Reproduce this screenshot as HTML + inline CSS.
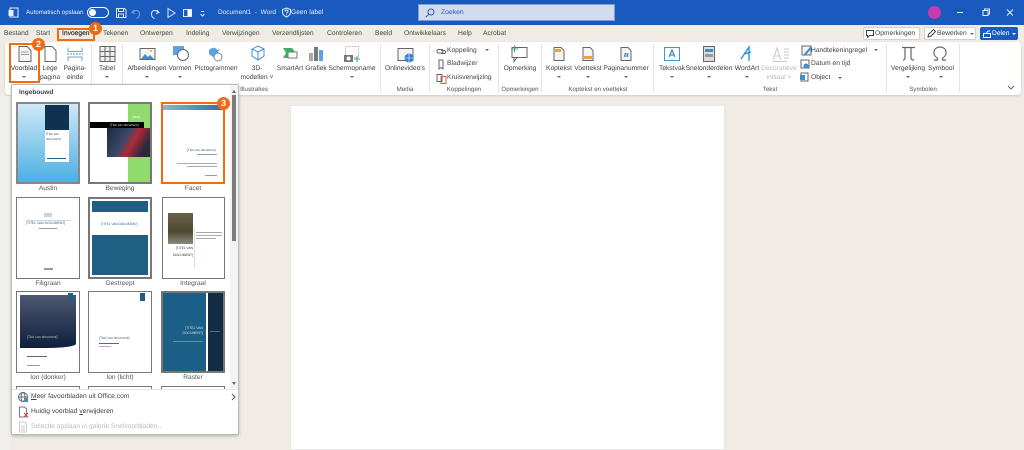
<!DOCTYPE html>
<html><head><meta charset="utf-8"><style>
html,body{margin:0;padding:0;width:1024px;height:450px;overflow:hidden;background:#f0ece4}
#r{position:absolute;left:0;top:0;width:1024px;height:450px;overflow:hidden;font-family:"Liberation Sans",sans-serif;color:#444;font-size:6.7px;filter:blur(.35px);text-rendering:geometricPrecision}
#r div,#r span.a,#r svg{position:absolute}
.t{white-space:nowrap;line-height:10px}
.c{white-space:nowrap;line-height:9px;text-align:center;transform:translateX(-50%)}
.g{white-space:nowrap;line-height:9px;font-size:6.2px;color:#555;text-align:center;transform:translateX(-50%);top:85px}
.w{color:#e8eefa}
.sep{width:1px;background:#e4e4e4;top:44px;height:48px}
.th{background:#fff;border:1px solid #777;box-sizing:border-box;width:64px;height:82px;overflow:hidden}
.l{white-space:nowrap;font-size:6.6px;line-height:10px;color:#555;text-align:center;width:64px}
.o{border:2.5px solid #f26b12;box-sizing:border-box}
.n{width:13px;height:13px;border-radius:50%;background:#f26b12;color:#fff;font-size:9px;line-height:13px;text-align:center;font-weight:bold}
.ar{width:0;height:0;border-left:2px solid transparent;border-right:2px solid transparent;border-top:2px solid #666}
.b{background:#1f5f83}
.x{background:#999;height:1px}
.m{white-space:nowrap;font-size:3.2px;line-height:5px;color:#2a5f85}
</style></head><body><div id="r">

<!-- title bar -->
<div style="left:0;top:0;width:1024px;height:25px;background:#185abd"></div>
<svg style="left:8px;top:7px" width="11" height="11" viewBox="0 0 11 11"><rect x="2" y="1" width="8" height="9" fill="none" stroke="#e8eefa"/><rect x="0.5" y="3" width="5" height="6" fill="#e8eefa"/></svg>
<div class="t w" style="left:26px;top:8px;font-size:6.200px">Automatisch opslaan</div>
<div style="left:87px;top:7px;width:22px;height:11px;border:1px solid #fff;border-radius:7px;box-sizing:border-box"></div>
<div style="left:89px;top:9px;width:7px;height:7px;background:#fff;border-radius:50%"></div>
<svg style="left:115px;top:7px" width="100" height="12" viewBox="0 0 100 12" fill="none" stroke="#dfe8f8"><path d="M1.500 1.500h8l1.500 1.500v7.500h-9.500zM3.500 1.500v3h5v-3M3.500 10.500v-3.500h5v3.500"/><path d="M19 3l-2 2.500 3 1M17.500 5.500c3-3.500 7-2 7 1.500s-2 4-3 4.500" stroke="#7fa3dc"/><path d="M42 3l2 2.500-3 1M43.500 5.500c-3-3.500-7-2-7 1.500s2 4 3 4.500"/><path d="M53 1.500l7 4.500-7 4.500z"/><rect x="68.500" y="2.500" width="8" height="7"/><rect x="72.500" y="3" width="4" height="6" fill="#fff" stroke="none"/><path d="M86 4.500h3M85.500 7l2 2 2-2" /></svg>
<div class="t w" style="left:218px;top:8px;font-size:6.500px">Document1 &nbsp;-&nbsp; Word</div>
<svg style="left:281px;top:7px" width="11" height="11" viewBox="0 0 11 11" fill="none" stroke="#e8eefa"><path d="M5.500 1l4 1.500v3c0 2-2 3.500-4 4.500-2-1-4-2.500-4-4.500v-3z"/><path d="M4 4.500c0-2 3-2 3 0 0 1-1.500 1-1.500 2M5.500 7.500v.8"/></svg>
<div class="t w" style="left:291px;top:8px">Geen label</div>
<div style="left:418px;top:4px;width:197px;height:17px;background:#d2dcee;border:1px solid #7e9cd0;box-sizing:border-box"></div>
<svg style="left:425px;top:8px" width="10" height="10" viewBox="0 0 10 10" fill="none" stroke="#2a5caa"><circle cx="6" cy="4" r="3"/><path d="M3.800 6.200l-3 3"/></svg>
<div class="t" style="left:441px;top:8px;font-size:6.800px;color:#2a5caa">Zoeken</div>
<div style="left:928px;top:6px;width:13px;height:13px;border-radius:50%;background:#c63ab2"></div>
<svg style="left:955px;top:6px" width="60" height="13" viewBox="0 0 60 13" fill="none" stroke="#e8eefa"><path d="M2 6.500h6"/><rect x="28" y="4.500" width="5" height="5"/><path d="M29.500 4.500v-1.500h5v5h-1.500"/><path d="M52 3.500l6 6M58 3.500l-6 6"/></svg>

<!-- tabs -->
<div class="t" style="left:4px;top:29px">Bestand</div>
<div class="t" style="left:36px;top:29px">Start</div>
<div class="t" style="left:62px;top:29px;-webkit-text-stroke:.2px #333;color:#333">Invoegen</div>
<div class="t" style="left:103px;top:29px">Tekenen</div>
<div class="t" style="left:140px;top:29px">Ontwerpen</div>
<div class="t" style="left:186px;top:29px">Indeling</div>
<div class="t" style="left:222px;top:29px">Verwijzingen</div>
<div class="t" style="left:272px;top:29px">Verzendlijsten</div>
<div class="t" style="left:327px;top:29px">Controleren</div>
<div class="t" style="left:375px;top:29px">Beeld</div>
<div class="t" style="left:404px;top:29px">Ontwikkelaars</div>
<div class="t" style="left:458px;top:29px">Help</div>
<div class="t" style="left:483px;top:29px">Acrobat</div>

<div style="left:863px;top:27px;width:57px;height:13px;background:#fff;border:1px solid #d0d0d0;border-radius:2px;box-sizing:border-box"></div>
<svg style="left:866px;top:30px" width="8" height="8" viewBox="0 0 8 8" fill="none" stroke="#444"><path d="M.5.500h7v5h-4l-2 2v-2h-1z"/></svg>
<div class="t" style="left:875px;top:29px">Opmerkingen</div>
<div style="left:924px;top:27px;width:52px;height:13px;background:#fff;border:1px solid #d0d0d0;border-radius:2px;box-sizing:border-box"></div>
<svg style="left:927px;top:29px" width="9" height="9" viewBox="0 0 9 9" fill="none" stroke="#444"><path d="M1 8l.5-2.500 5-5 2 2-5 5z"/></svg>
<div class="t" style="left:937px;top:29px">Bewerken</div>
<div class="ar" style="left:970px;top:33px"></div>
<div style="left:980px;top:27px;width:38px;height:13px;background:#185abd;border-radius:2px"></div>
<svg style="left:983px;top:30px" width="8" height="8" viewBox="0 0 8 8" fill="none" stroke="#fff"><path d="M.5 3.500h7v4h-7zM3 3.500l2-2.500h2"/></svg>
<div class="t" style="left:992px;top:29px;color:#fff">Delen</div>
<div class="ar" style="left:1012px;top:33px;border-top-color:#fff"></div>

<!-- ribbon -->
<div style="left:5px;top:42px;width:1016px;height:53px;background:#fff;border-radius:4px;box-shadow:0 1px 2px rgba(0,0,0,.15)"></div>
<div class="sep" style="left:91px"></div><div class="sep" style="left:122px"></div><div class="sep" style="left:380px"></div><div class="sep" style="left:429px"></div><div class="sep" style="left:498px"></div><div class="sep" style="left:541px"></div><div class="sep" style="left:653px"></div><div class="sep" style="left:886px"></div><div class="sep" style="left:959px"></div>

<!-- ribbon icons -->
<svg style="left:0;top:42px" width="1024" height="30" viewBox="0 42 1024 30" fill="none" stroke="#666">
<path d="M19 46.500h8l4 4v11h-12z" fill="#f4f4f4"/><path d="M21 52h7M21 54.500h8" stroke="#999"/>
<path d="M45 46.500h7l4 4v11h-11z"/>
<path d="M68 47.500v4h14v-4M68 61v-4h14v4" stroke="#7a9cc0"/><path d="M67 54h16" stroke="#5b8fc4" stroke-dasharray="2 1"/>
<rect x="100" y="46.500" width="15" height="15" fill="#eee"/><path d="M100 51.500h15M100 56.500h15M105 46.500v15M110 46.500v15"/>
<rect x="140" y="48.500" width="15" height="11" fill="#f6f6f6"/><path d="M141 59l4-5 3 3 2-2 4 4z" fill="#3f8fcf" stroke="none"/><circle cx="151" cy="51" r="1" fill="#f0a030" stroke="none"/>
<rect x="173" y="46" width="11" height="9" fill="#5aa3e0" stroke="none"/><circle cx="183" cy="55" r="5.500" fill="#fff" stroke="#666"/>
<path d="M209 50c3-3 7-3 8 0l3-1-2 3c0 3-2 5-5 5l-4-3z" fill="#5aa3e0" stroke="none"/><circle cx="218" cy="57" r="4" fill="#fff" stroke="#888"/>
<path d="M258 46l6 3v7l-6 4-6-4v-7zM252 49l6 3 6-3M258 52v8" stroke="#3f8fcf"/>
<path d="M283 48h9l4 5-4 5h-9l3-5z" fill="#3fae6a" stroke="none"/><rect x="288" y="52" width="9" height="6" fill="#fff" stroke="#777"/>
<rect x="309" y="53" width="4" height="8" fill="#aaa" stroke="none"/><rect x="314" y="47" width="4" height="14" fill="#777" stroke="none"/><rect x="319" y="50" width="4" height="11" fill="#5aa3e0" stroke="none"/>
<rect x="345.500" y="46.500" width="13" height="11" stroke="#bbb" stroke-dasharray="2 1"/><rect x="344" y="55" width="9" height="7" fill="#777" stroke="none"/><circle cx="348.500" cy="58.500" r="2" fill="#fff" stroke="none"/><path d="M354 59h6M357 56v6" stroke="#3fae6a"/>
<rect x="398" y="48.500" width="15" height="12" fill="#f4f4f4"/><circle cx="409" cy="58" r="4.500" fill="#2f80d0" stroke="none"/><path d="M405 58h8M409 53.500v9" stroke="#fff" stroke-width=".6"/>
<rect x="512" y="47.500" width="15" height="10" /><path d="M514 57.500v4l3-4" /><path d="M511 49h7M514.500 45.500v7" stroke="#3fae6a"/>
<path d="M554 47.500h7l3 3v10h-10z" fill="#f4f4f4"/><rect x="555" y="49" width="6" height="3" fill="#f0a040" stroke="none"/>
<path d="M583 47.500h7l3 3v10h-10z" fill="#f4f4f4"/><rect x="584" y="56" width="8" height="3" fill="#f0a040" stroke="none"/>
<path d="M621 47.500h7l3 3v10h-10z" fill="#f4f4f4"/><path d="M624.500 57l1-4M627 57l1-4M624 54h4.500M624 56h4.500" stroke="#2f6fb0" stroke-width=".7"/>
<rect x="664.500" y="47.500" width="15" height="13" stroke="#4a90d0"/><path d="M669 57l3-7 3 7M670 55h4" stroke="#2f6fb0"/>
<rect x="703.500" y="46.500" width="11" height="15" fill="#ddd"/><rect x="705" y="49" width="8" height="3" fill="#3f8fcf" stroke="none"/><rect x="705" y="54" width="8" height="3" fill="#999" stroke="none"/>
<path d="M741 59l8-12v14M744 54l7-2M741 59" stroke="#1f8fe0" stroke-width="1.300"/>
<path d="M773 60l4-12 4 12M774.500 56h5M773 61.500h14M784 49h5M784 52h5M784 55h5M784 58h5" stroke="#c8c8c8"/>
<rect x="802" y="46" width="9" height="9" fill="#f4f4f4"/><path d="M804 54l6-7 2 1-6 7z" fill="#3f8fcf" stroke="none"/>
<rect x="801" y="60" width="8" height="8"/><circle cx="806" cy="66" r="2.500" fill="#3f8fcf" stroke="none"/>
<path d="M902 47.500h13M905 48v9.500c0 2-1 2.500-2 2.500M911 48v10c0 1.500 1 2 3 2" stroke-width="1.200"/>
<path d="M934 60h3.500v-2c-6-3-4-11 2.500-11s8.500 8 2.500 11v2h3.500" stroke-width="1.200"/>
</svg>
<svg style="left:0;top:42px" width="1024" height="50" viewBox="0 42 1024 50" fill="none" stroke="#666">
<path d="M438 49.500h4a2 2 0 010 3.500h-4a2 2 0 010-3.500zM441 50.500h4a2 2 0 010 3h-4"/>
<path d="M439 60v9l2-1.500 2 1.500v-9z"/>
<rect x="437" y="74.500" width="5" height="7"/><rect x="441" y="76.500" width="5" height="7" stroke="#d06050"/>
<rect x="801" y="73" width="7" height="8"/><rect x="800" y="75" width="5" height="5" fill="#3f8fcf" stroke="none"/>
</svg>

<!-- ribbon text -->
<div class="c" style="left:24px;top:64px;color:#333">Voorblad</div>
<div class="c" style="left:50px;top:64px">Lege<br>pagina</div>
<div class="c" style="left:75px;top:64px">Pagina-<br>einde</div>
<div class="c" style="left:107px;top:64px">Tabel</div>
<div class="c" style="left:147px;top:64px">Afbeeldingen</div>
<div class="c" style="left:180px;top:64px">Vormen</div>
<div class="c" style="left:216px;top:64px">Pictogrammen</div>
<div class="c" style="left:257px;top:64px">3D-<br>modellen ˅</div>
<div class="c" style="left:290px;top:64px">SmartArt</div>
<div class="c" style="left:316px;top:64px">Grafiek</div>
<div class="c" style="left:352px;top:64px">Schermopname</div>
<div class="c" style="left:405px;top:64px">Onlinevideo's</div>
<div class="t" style="left:447px;top:46px">Koppeling</div>
<div class="t" style="left:447px;top:59px">Bladwijzer</div>
<div class="t" style="left:447px;top:73px">Kruisverwijzing</div>
<div class="c" style="left:520px;top:64px">Opmerking</div>
<div class="c" style="left:559px;top:64px">Koptekst</div>
<div class="c" style="left:588px;top:64px">Voettekst</div>
<div class="c" style="left:626px;top:64px">Paginanummer</div>
<div class="c" style="left:672px;top:64px">Tekstvak</div>
<div class="c" style="left:709px;top:64px">Snelonderdelen</div>
<div class="c" style="left:747px;top:64px">WordArt</div>
<div class="c" style="left:779px;top:64px;color:#bbb">Decoratieve<br>initiaal ˅</div>
<div class="t" style="left:811px;top:46px">Handtekeningregel</div>
<div class="t" style="left:811px;top:59px">Datum en tijd</div>
<div class="t" style="left:811px;top:73px">Object</div>
<div class="c" style="left:908px;top:64px">Vergelijking</div>
<div class="c" style="left:941px;top:64px">Symbool</div>
<div class="ar" style="left:22px;top:76px"></div><div class="ar" style="left:105px;top:76px"></div><div class="ar" style="left:145px;top:76px"></div><div class="ar" style="left:178px;top:76px"></div><div class="ar" style="left:350px;top:76px"></div><div class="ar" style="left:557px;top:76px"></div><div class="ar" style="left:586px;top:76px"></div><div class="ar" style="left:624px;top:76px"></div><div class="ar" style="left:670px;top:76px"></div><div class="ar" style="left:707px;top:76px"></div><div class="ar" style="left:745px;top:76px"></div><div class="ar" style="left:906px;top:76px"></div><div class="ar" style="left:939px;top:76px"></div><div class="ar" style="left:485px;top:49px"></div><div class="ar" style="left:874px;top:49px"></div><div class="ar" style="left:838px;top:77px"></div>
<div class="g" style="left:254px">Illustraties</div>
<div class="g" style="left:405px">Media</div>
<div class="g" style="left:464px">Koppelingen</div>
<div class="g" style="left:520px">Opmerkingen</div>
<div class="g" style="left:598px">Koptekst en voettekst</div>
<div class="g" style="left:770px">Tekst</div>
<div class="g" style="left:923px">Symbolen</div>
<svg style="left:1007px;top:85px" width="8" height="6" viewBox="0 0 8 6" fill="none" stroke="#666"><path d="M1 1l3 3 3-3"/></svg>

<!-- page -->
<div style="left:290px;top:105px;width:435px;height:345px;background:#fff;border:1px solid #e8e8e8;box-sizing:border-box"></div>
<div style="left:0;top:96px;width:11px;height:354px;background:#eff0ee"></div>

<!-- gallery -->
<div style="left:11px;top:84px;width:228px;height:351px;background:#fff;border:1px solid #bbb;border-radius:2px;box-sizing:border-box;box-shadow:0 1px 3px rgba(0,0,0,.25)"></div>
<div class="t" style="left:19px;top:88px;font-weight:bold;font-size:6.500px">Ingebouwd</div>
<div style="left:230px;top:85px;width:8px;height:303px;background:#f3f3f3"></div>
<div style="left:232px;top:95px;width:4px;height:146px;background:#7c7c7c"></div>
<div style="left:232px;top:90px;border-left:2px solid transparent;border-right:2px solid transparent;border-bottom:3px solid #666"></div>
<div style="left:232px;top:382px;border-left:2px solid transparent;border-right:2px solid transparent;border-top:3px solid #666"></div>

<!-- row 1 -->
<div class="th" style="left:16px;top:102px;background:linear-gradient(#cfe8f6,#4bb0e4);border:2px solid #888">
 <div style="left:27px;top:1px;width:24px;height:25px;background:#12304f"></div>
 <div style="left:27px;top:26px;width:24px;height:32px;background:#fff"></div>
 <div class="m" style="left:28px;top:28px;line-height:4.500px">[Titel van<br>document]</div>
 <div class="x" style="left:29px;top:54px;width:19px;background:#2a5f85"></div>
</div>
<div class="th" style="left:88px;top:102px;border:2px solid #777">
 <div style="left:38px;top:0;width:24px;height:78px;background:#8fdc6c"></div>
 <div style="left:0;top:18px;width:54px;height:6px;background:#000"></div>
 <div class="m" style="left:20px;top:19px;color:#ddd">[Titel van document]</div>
 <div class="m" style="left:42px;top:11px;color:#fff">[Jaar]</div>
 <div style="left:17px;top:24px;width:45px;height:29px;background:linear-gradient(120deg,#1a2740,#3b4a6a 40%,#b02a36 55%,#2a2a3a 80%)"></div>
</div>
<div class="th" style="left:162px;top:103px;width:62px;height:81px;border:none">
 <div style="left:0;top:2px;width:62px;height:5px;background:linear-gradient(90deg,#8fb8cc,#2d6f90)"></div>
 <div class="m" style="left:25px;top:45px">[Titel van document]</div>
 <div class="x" style="left:35px;top:51px;width:20px"></div>
 <div class="x" style="left:15px;top:60px;width:40px;background:#aaa"></div>
 <div class="x" style="left:25px;top:63px;width:30px;background:#aaa"></div>
 <div class="x" style="left:43px;top:72px;width:12px"></div>
</div>
<div class="o" style="left:161px;top:102px;width:64px;height:82px"></div>

<!-- row 2 -->
<div class="th" style="left:16px;top:197px">
 <div class="x" style="left:9px;top:22px;width:45px;background:#cdd8df"></div>
 <div class="m" style="left:9px;top:23px;font-size:3.400px">[TITEL VAN DOCUMENT]</div>
 <div class="x" style="left:22px;top:30px;width:18px"></div>
 <div class="x" style="left:27px;top:15px;width:8px;background:#c4d8e2;height:4px"></div>
 <div class="x" style="left:27px;top:70px;width:9px;height:2px"></div>
</div>
<div class="th" style="left:88px;top:197px;border:2px solid #777">
 <div class="b" style="left:2px;top:2px;width:56px;height:11px"></div>
 <div class="m" style="left:11px;top:23px;font-size:3.200px">[TITEL VAN DOCUMENT]</div>
 <div class="b" style="left:2px;top:36px;width:56px;height:40px"></div>
</div>
<div class="th" style="left:162px;top:197px;width:63px">
 <div style="left:5px;top:15px;width:25px;height:31px;background:linear-gradient(#6b6048,#4d4930 60%,#8a8a80)"></div>
 <div class="m" style="left:10px;top:47px;font-size:3.300px;line-height:7px;text-align:right;color:#333">[TITEL VAN<br>DOCUMENT]</div>
 <div class="x" style="left:33px;top:34px;width:26px;background:#aaa"></div>
 <div class="x" style="left:33px;top:37px;width:26px;background:#aaa"></div>
 <div class="x" style="left:33px;top:40px;width:20px;background:#aaa"></div>
 <div style="left:31px;top:30px;width:1px;height:40px;background:#f0d8d0"></div>
</div>

<!-- row 3 -->
<div class="th" style="left:16px;top:291px">
 <div style="left:3px;top:3px;width:56px;height:53px;border-radius:0 0 50%/0 0 8%;background:linear-gradient(#4d5870,#0f1f3c)"></div>
 <div class="b" style="left:51px;top:1px;width:5px;height:8px"></div>
 <div class="m" style="left:10px;top:43px;color:#b8c2d0;font-size:3.400px">[Titel van document]</div>
 <div class="x" style="left:10px;top:64px;width:20px;height:1px;background:#666"></div>
 <div class="x" style="left:10px;top:73px;width:13px"></div>
</div>
<div class="th" style="left:88px;top:291px">
 <div class="b" style="left:51px;top:1px;width:5px;height:8px"></div>
 <div class="m" style="left:10px;top:44px;color:#48647a;font-size:3.400px">[Titel van document]</div>
 <div class="x" style="left:10px;top:51px;width:20px;background:#666"></div>
 <div class="x" style="left:10px;top:54px;width:12px;background:#c0a8c0"></div>
</div>
<div class="th" style="left:161px;top:291px;width:64px;background:#fff;border:2px solid #777">
 <div class="b" style="left:0;top:0;width:43px;height:78px;background:#1a5f85"></div>
 <div style="left:45px;top:0;width:15px;height:78px;background:#122c46"></div>
 <div class="m" style="right:20px;top:33px;color:#d0e0e8;font-size:3.400px;text-align:right;line-height:5px">[TITEL VAN<br>DOCUMENT]</div>
 <div class="x" style="left:10px;top:48px;width:30px;background:#5f93ad"></div>
 <div class="x" style="left:47px;top:38px;width:10px;background:#50708a"></div>
</div>

<div class="l" style="left:16px;top:184px">Austin</div>
<div class="l" style="left:88px;top:184px">Beweging</div>
<div class="l" style="left:161px;top:184px">Facet</div>
<div class="l" style="left:16px;top:279px">Filigraan</div>
<div class="l" style="left:88px;top:279px">Gestreept</div>
<div class="l" style="left:161px;top:279px">Integraal</div>
<div class="l" style="left:16px;top:373px">Ion (donker)</div>
<div class="l" style="left:88px;top:373px">Ion (licht)</div>
<div class="l" style="left:161px;top:373px">Raster</div>

<!-- row 4 stubs -->
<div style="left:16px;top:386px;width:64px;height:3px;border:1px solid #777;border-bottom:none;box-sizing:border-box"></div>
<div style="left:88px;top:386px;width:64px;height:3px;border:1px solid #777;border-bottom:none;box-sizing:border-box"></div>
<div style="left:161px;top:386px;width:64px;height:3px;border:1px solid #777;border-bottom:none;box-sizing:border-box"></div>

<!-- menu -->
<div style="left:12px;top:389px;width:226px;height:1px;background:#e6e6e6"></div>
<svg style="left:17px;top:391px" width="12" height="12" viewBox="0 0 12 12" fill="none" stroke="#666"><circle cx="6" cy="6" r="4.500"/><ellipse cx="6" cy="6" rx="2" ry="4.500"/><path d="M1.500 6h9"/><rect x="7" y="7" width="4" height="4" fill="#3f8fcf" stroke="none"/></svg>
<div class="t" style="left:31px;top:392px"><u>M</u>eer favoorbladen uit Office.com</div>
<svg style="left:231px;top:393px" width="5" height="8" viewBox="0 0 5 8" fill="none" stroke="#555"><path d="M1 1l3 3-3 3"/></svg>
<svg style="left:18px;top:406px" width="11" height="12" viewBox="0 0 11 12" fill="none" stroke="#777"><path d="M1.500 1h5l2 2v8h-7z"/><path d="M6 7l4 4M10 7l-4 4" stroke="#e04040"/></svg>
<div class="t" style="left:31px;top:407px">Huidig voorblad <u>v</u>erwijderen</div>
<svg style="left:18px;top:421px" width="10" height="12" viewBox="0 0 10 12" fill="none" stroke="#ccc"><path d="M1.500 1h5l2 2v8h-7zM3 5h4M3 7h4M3 9h4"/></svg>
<div class="t" style="left:31px;top:422px;color:#bbb">Selectie opslaan in galerie Snelvoorbladen...</div>

<!-- callouts -->
<div class="o" style="left:57px;top:28px;width:38px;height:13px"></div>
<div class="o" style="left:9px;top:43px;width:31px;height:40px"></div>
<div class="n" style="left:89px;top:22px">1</div>
<div class="n" style="left:32px;top:38px">2</div>
<div class="n" style="left:217px;top:97px">3</div>
</div></body></html>
